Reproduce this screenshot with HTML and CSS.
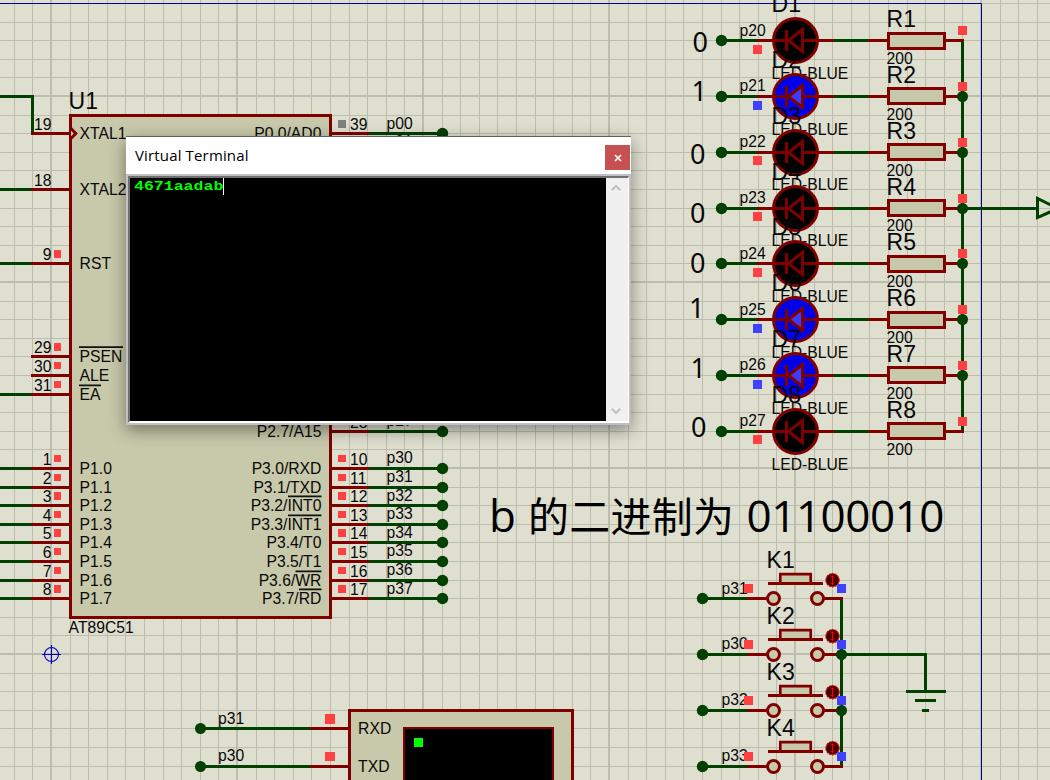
FILE: index.html
```html
<!DOCTYPE html>
<html lang="zh">
<head>
<meta charset="utf-8">
<title>Virtual Terminal</title>
<link rel="stylesheet" href="styles.css">
</head>
<body>
<main class="editor">
<svg class="sheet" width="1050" height="780" viewBox="0 0 1050 780">
  <defs>
    <pattern id="grid" x="50" y="95" width="186" height="186" patternUnits="userSpaceOnUse">
      <path class="grid" d="M20.5 0V186M38.5 0V186M57.5 0V186M75.5 0V186M94.5 0V186M113.5 0V186M131.5 0V186M150.5 0V186M168.5 0V186M0 20.5H186M0 38.5H186M0 57.5H186M0 75.5H186M0 94.5H186M0 113.5H186M0 131.5H186M0 150.5H186M0 168.5H186"/>
      <path class="grid major" d="M1 0V186M0 1H186"/>
    </pattern>
    <g id="ledwire">
      <path class="net" d="M722 0H757M834 0H868"/>
      <path class="pin" d="M757 0H772M819 0H834M868 0H888M945 0H962"/>
      <circle class="dot" cx="721.5" cy="0" r="5.7"/>
    </g>
    <g id="diode">
      <circle class="bulb" cx="795.5" cy="0" r="22"/>
      <path class="ray" d="M788.5 0L802.5 -11V11Z"/>
      <path class="mark" d="M772 0H788M803 0H819M786.5 -10.5V10.5"/>
    </g>
    <rect id="res" class="part" x="888.5" y="-7.5" width="56" height="15"/>
    <g id="key">
      <path class="net" d="M703 0H747"/>
      <path class="pin" d="M747 0H767M823 0H843"/>
      <circle class="dot" cx="702.5" cy="0" r="5.7"/>
      <circle class="part" cx="773.5" cy="0" r="6"/>
      <circle class="part" cx="817.5" cy="0" r="6"/>
      <path class="part thin" d="M780.3 -15V-24.3H810.7V-15"/>
      <path class="pin" d="M768 -15H823"/>
      <circle class="knob" cx="832.5" cy="-18.3" r="6.6"/>
      <path class="arrows" d="M832.5 -22.8V-13.8M830.3 -20.6L832.5 -22.8L834.7 -20.6M830.3 -16L832.5 -13.8L834.7 -16"/>
    </g>
  </defs>

  <rect class="paper" width="1050" height="780"/>
  <rect width="1050" height="780" fill="url(#grid)"/>
  <path class="frame" d="M0 3.5H981.5V780"/>

  <!-- U1 microcontroller -->
  <g>
    <rect class="part" x="70.5" y="115.5" width="260" height="502"/>
    <path class="net" d="M0 96.5H32.5V133.5M0 189.5H31M0 263.5H31M0 394.5H31M0 468.5H31M0 487.5H31M0 505.5H31M0 524.5H31M0 542.5H31M0 561.5H31M0 580.5H31M0 598.5H31"/>
    <path class="pin" d="M31 133.5H70M31 189.5H70M31 263.5H70M31 356.5H70M31 375.5H70M31 394.5H70M31 468.5H70M31 487.5H70M31 505.5H70M31 524.5H70M31 542.5H70M31 561.5H70M31 580.5H70M31 598.5H70"/>
    <path class="part clock" d="M71 128.5L75.8 133.5L71 138.5"/>
    <path class="pin" d="M331 133.5H369M331 431.5H369M331 468.5H369M331 487.5H369M331 505.5H369M331 524.5H369M331 542.5H369M331 561.5H369M331 580.5H369M331 598.5H369"/>
    <path class="net" d="M369 133.5H442M369 431.5H442M369 468.5H442M369 487.5H442M369 505.5H442M369 524.5H442M369 542.5H442M369 561.5H442M369 580.5H442M369 598.5H442"/>
    <g class="dot">
      <circle cx="442.5" cy="133.5" r="5.7"/><circle cx="442.5" cy="431.5" r="5.7"/><circle cx="442.5" cy="468.5" r="5.7"/><circle cx="442.5" cy="487.5" r="5.7"/><circle cx="442.5" cy="505.5" r="5.7"/><circle cx="442.5" cy="524.5" r="5.7"/><circle cx="442.5" cy="542.5" r="5.7"/><circle cx="442.5" cy="561.5" r="5.7"/><circle cx="442.5" cy="580.5" r="5.7"/><circle cx="442.5" cy="598.5" r="5.7"/>
    </g>
    <path class="hi" d="M54 250h7v8h-7zM54 343h7v8h-7zM54 362h7v7h-7zM54 381h7v7h-7zM54 455h7v7h-7zM54 474h7v7h-7zM54 492h7v8h-7zM54 511h7v7h-7zM54 529h7v8h-7zM54 548h7v7h-7zM54 567h7v7h-7zM54 585h7v8h-7z"/>
    <path class="hi" d="M338 455h8v7h-8zM338 474h8v7h-8zM338 492h8v8h-8zM338 511h8v7h-8zM338 529h8v8h-8zM338 548h8v7h-8zM338 567h8v7h-8zM338 585h8v8h-8z"/>
    <rect class="float" x="338" y="120" width="8" height="8"/>
    <text class="ref" x="68" y="109">U1</text>
    <g class="lbl end">
      <text x="52" y="130">19</text><text x="52" y="186">18</text><text x="52" y="260">9</text><text x="52" y="353">29</text><text x="52" y="372">30</text><text x="52" y="391">31</text>
      <text x="52" y="465">1</text><text x="52" y="484">2</text><text x="52" y="502">3</text><text x="52" y="521">4</text><text x="52" y="539">5</text><text x="52" y="558">6</text><text x="52" y="577">7</text><text x="52" y="595">8</text>
      <text x="322" y="139">P0.0/AD0</text><text x="322" y="437">P2.7/A15</text><text x="322" y="474">P3.0/RXD</text><text x="322" y="493">P3.1/TXD</text><text x="322" y="511">P3.2/INT0</text><text x="322" y="530">P3.3/INT1</text><text x="322" y="548">P3.4/T0</text><text x="322" y="567">P3.5/T1</text><text x="322" y="586">P3.6/WR</text><text x="322" y="604">P3.7/RD</text>
    </g>
    <g class="lbl">
      <text x="79" y="139">XTAL1</text><text x="79" y="195">XTAL2</text><text x="79" y="269">RST</text><text x="79" y="362">PSEN</text><text x="79" y="381">ALE</text><text x="79" y="400">EA</text>
      <text x="79" y="474">P1.0</text><text x="79" y="493">P1.1</text><text x="79" y="511">P1.2</text><text x="79" y="530">P1.3</text><text x="79" y="548">P1.4</text><text x="79" y="567">P1.5</text><text x="79" y="586">P1.6</text><text x="79" y="604">P1.7</text>
      <text x="68" y="633">AT89C51</text>
      <text x="349.5" y="130">39</text><text x="349.5" y="428">28</text><text x="349.5" y="465">10</text><text x="349.5" y="484">11</text><text x="349.5" y="502">12</text><text x="349.5" y="521">13</text><text x="349.5" y="539">14</text><text x="349.5" y="558">15</text><text x="349.5" y="577">16</text><text x="349.5" y="595">17</text>
      <text x="386" y="129">p00</text><text x="386" y="147">p01</text><text x="386" y="426">p27</text><text x="386" y="463">p30</text><text x="386" y="482">p31</text><text x="386" y="501">p32</text><text x="386" y="519">p33</text><text x="386" y="538">p34</text><text x="386" y="556">p35</text><text x="386" y="575">p36</text><text x="386" y="594">p37</text>
    </g>
    <path class="bar" d="M79 347.2H123M79 385.3H101M288 496.3H321.5M288 515.3H321.5M295.5 571.3H321.5M299 589.3H321.5"/>
  </g>

  <g class="origin"><circle cx="51.5" cy="654.5" r="7"/><path d="M42 654.5H61M51.5 645V664"/></g>

  <!-- LED bank -->
  <g>
    <use href="#ledwire" y="40.5"/><use href="#ledwire" y="96.5"/><use href="#ledwire" y="152.5"/><use href="#ledwire" y="208.5"/><use href="#ledwire" y="263.5"/><use href="#ledwire" y="319.5"/><use href="#ledwire" y="375.5"/><use href="#ledwire" y="431.5"/>
    <path class="net" d="M962.5 40.5V431M962 208.5H1037"/>
    <path class="pin" d="M946 40.5H964M946 431.5H964"/>
    <path class="net hollow" d="M1037.5 198.5V217.5L1058 208.5Z"/>
    <g class="dot"><circle cx="962.5" cy="96.5" r="5.5"/><circle cx="962.5" cy="152.5" r="5.5"/><circle cx="962.5" cy="208.5" r="5.5"/><circle cx="962.5" cy="263.5" r="5.5"/><circle cx="962.5" cy="319.5" r="5.5"/><circle cx="962.5" cy="375.5" r="5.5"/></g>
    <use href="#res" y="41"/><use href="#res" y="96"/><use href="#res" y="152"/><use href="#res" y="208"/><use href="#res" y="264"/><use href="#res" y="320"/><use href="#res" y="375"/><use href="#res" y="431"/>
    <path class="hi" d="M958 26h9v9h-9zM958 82h9v9h-9zM958 138h9v9h-9zM958 194h9v9h-9zM958 249h9v9h-9zM958 305h9v9h-9zM958 361h9v9h-9zM958 417h9v9h-9z"/>
    <path class="hi" d="M753 45h9v9h-9zM753 156h9v9h-9zM753 212h9v9h-9zM753 268h9v9h-9zM753 435h9v9h-9z"/>
    <path class="lo" d="M753 101h9v9h-9zM753 324h9v9h-9zM753 380h9v9h-9z"/>

    <use href="#diode" class="off" y="40.5"/><text class="ref" x="771" y="12">D1</text><text class="lbl" x="771" y="79">LED-BLUE</text>
    <use href="#diode" class="on" y="96.5"/><text class="ref" x="771" y="68">D2</text><text class="lbl" x="771" y="135">LED-BLUE</text>
    <use href="#diode" class="off" y="152.5"/><text class="ref" x="771" y="124">D3</text><text class="lbl" x="771" y="190">LED-BLUE</text>
    <use href="#diode" class="off" y="208.5"/><text class="ref" x="771" y="180">D4</text><text class="lbl" x="771" y="246">LED-BLUE</text>
    <use href="#diode" class="off" y="263.5"/><text class="ref" x="771" y="235">D5</text><text class="lbl" x="771" y="302">LED-BLUE</text>
    <use href="#diode" class="on" y="319.5"/><text class="ref" x="771" y="291">D6</text><text class="lbl" x="771" y="358">LED-BLUE</text>
    <use href="#diode" class="on" y="375.5"/><text class="ref" x="771" y="347">D7</text><text class="lbl" x="771" y="414">LED-BLUE</text>
    <use href="#diode" class="off" y="431.5"/><text class="ref" x="771" y="403">D8</text><text class="lbl" x="771" y="470">LED-BLUE</text>

    <g class="ref">
      <text x="886" y="27">R1</text><text x="886" y="83">R2</text><text x="886" y="139">R3</text><text x="886" y="195">R4</text><text x="886" y="250">R5</text><text x="886" y="306">R6</text><text x="886" y="362">R7</text><text x="886" y="418">R8</text>
    </g>
    <g class="lbl">
      <text x="886" y="64">200</text><text x="886" y="120">200</text><text x="886" y="176">200</text><text x="886" y="231">200</text><text x="886" y="287">200</text><text x="886" y="343">200</text><text x="886" y="399">200</text><text x="886" y="455">200</text>
      <text x="739" y="36">p20</text><text x="739" y="91">p21</text><text x="739" y="147">p22</text><text x="739" y="203">p23</text><text x="739" y="259">p24</text><text x="739" y="315">p25</text><text x="739" y="370">p26</text><text x="739" y="426">p27</text>
    </g>
    <g class="bit">
      <text x="692.5" y="52">0</text><text x="691.5" y="101">1</text><text x="690" y="164">0</text><text x="690" y="223">0</text><text x="690" y="273">0</text><text x="689" y="318">1</text><text x="690.5" y="378">1</text><text x="691" y="437">0</text>
    </g>
  </g>

  <g class="note">
    <text x="489" y="532">b</text>
    <text class="han" x="528" y="532" textLength="206">的二进制为</text>
    <text x="746.5" y="532" textLength="198">01100010</text>
  </g>

  <!-- push buttons -->
  <g>
    <path class="net" d="M841.5 600V765M842 654.5H925.5V691.5M906 691.5H946M915 700.5H936M922 710.5H929"/>
    <use href="#key" y="598.5"/><use href="#key" y="654.5"/><use href="#key" y="710.5"/><use href="#key" y="766.5"/>
    <circle class="dot" cx="841.5" cy="654.5" r="5.5"/><circle class="dot" cx="841.5" cy="710.5" r="5.5"/>
    <g class="ref"><text x="766" y="568">K1</text><text x="766" y="624">K2</text><text x="766" y="680">K3</text><text x="766" y="736">K4</text></g>
    <g class="lbl"><text x="721" y="594">p31</text><text x="721" y="649">p30</text><text x="721" y="705">p32</text><text x="721" y="761">p33</text></g>
    <path class="hi" d="M744 584h9v9h-9zM744 640h9v9h-9zM744 696h9v9h-9zM744 752h9v9h-9z"/>
    <path class="lo" d="M837 584h9v9h-9zM837 640h9v9h-9zM837 696h9v9h-9zM837 752h9v9h-9z"/>
  </g>

  <!-- serial terminal part -->
  <g>
    <rect class="part" x="349.5" y="710.5" width="223" height="90"/>
    <rect class="screen" x="404" y="728" width="149" height="80"/>
    <rect class="cursor" x="414" y="738" width="9" height="9"/>
    <path class="net" d="M201 728.5H310M201 766.5H310"/>
    <path class="pin" d="M310 728.5H349M310 766.5H349"/>
    <g class="dot"><circle cx="200.5" cy="728.5" r="5.5"/><circle cx="200.5" cy="766.5" r="5.5"/></g>
    <path class="hi" d="M325 714h10v10h-10zM325 752h10v9h-10z"/>
    <g class="lbl"><text x="217.5" y="724">p31</text><text x="217.5" y="761">p30</text><text x="357.5" y="734">RXD</text><text x="357.5" y="772">TXD</text></g>
  </g>
</svg>

<section class="window">
  <header class="titlebar">
    <span class="title">Virtual Terminal</span>
    <span class="close"><svg width="8" height="8" viewBox="0 0 8 8"><path d="M1 1L7 7M7 1L1 7"/></svg></span>
  </header>
  <div class="client">
    <div class="output"><span class="typed">4671aadab</span><i class="caret"></i></div>
    <div class="scroll">
      <svg width="10" height="8" viewBox="0 0 10 8"><path d="M.7 6.3L5 2L9.3 6.3"/></svg>
      <svg width="10" height="8" viewBox="0 0 10 8"><path d="M.7 1.7L5 6L9.3 1.7"/></svg>
    </div>
  </div>
</section>
</main>
</body>
</html>
```
FILE: styles.css
```css
body { margin: 0; overflow: hidden; }
.editor { position: relative; width: 1050px; height: 780px; overflow: hidden; }
.sheet { display: block; }
.paper { fill: #dfdfd0; }
.grid { stroke: #bdbdad; stroke-width: 1; fill: none; shape-rendering: crispEdges; }
.major { stroke-width: 2; }
.frame { fill: none; stroke: #0000a0; stroke-width: 1; }

.net, .pin { fill: none; stroke-width: 3; }
.net { stroke: #004000; }
.pin { stroke: #800000; }
.dot { fill: #004000; }
.part { fill: #c8c8aa; stroke: #800000; stroke-width: 3; }
.part.thin { stroke-width: 2.7; }
.clock { stroke-width: 3; }
.bar { stroke: #101010; stroke-width: 1.7; }
.hi { fill: #ff4040; }
.lo { fill: #4040ff; }
.float { fill: #808080; }
.origin { fill: none; stroke: #0000c0; stroke-width: 1.1; }

.bulb { stroke: #800000; stroke-width: 3; }
.ray { stroke: #800000; stroke-width: 2.9; fill: var(--ray); }
.mark { fill: none; stroke: #800000; stroke-width: 3; }
.off { fill: #000; --ray: #000; }
.on { fill: #0000e8; --ray: #3c3cff; }

.knob { fill: #400000; stroke: #d80000; stroke-width: 1.2; stroke-dasharray: 2.2 .8; }
.arrows { fill: none; stroke: #ff0000; stroke-width: 1; }
.screen { fill: #000; stroke: #800000; stroke-width: 2; }
.cursor { fill: #00ff00; }

.lbl, .ref { font-family: "Liberation Sans", Arial, sans-serif; fill: #080808; transform: translate(.6px, 0); }
.lbl { font-size: 15.7px; }
.ref { font-size: 23px; }
.end { text-anchor: end; transform: translate(-.6px, 0); }
.bit { font: 27px "Noto Sans", "Open Sans", sans-serif; fill: #080808; }
.note { font: 44px "Open Sans", "Noto Sans", sans-serif; fill: #000; }
.han { font: 41px "Noto Sans CJK SC", sans-serif; }

.window {
  position: absolute; left: 126px; top: 136px; width: 505px; height: 289px;
  box-sizing: border-box; display: flex; flex-direction: column;
  background: #c0c0c4; border-top: 1px solid #60605c;
  box-shadow: 0 5px 16px rgba(0, 0, 0, .42);
}
.titlebar {
  flex: none; height: 37px; box-sizing: border-box; padding: 0 1px 0 9px;
  display: flex; align-items: center; justify-content: space-between;
  background: #fff; color: #000;
}
.title { font: 15px "Open Sans", sans-serif; letter-spacing: .15px; margin-top: -2px; }
.close {
  width: 25px; height: 25px; margin-top: 4px; background: #c75050;
  display: flex; align-items: center; justify-content: center;
}
.close path { stroke: #fff; stroke-width: 1.7; fill: none; }
.client {
  flex: 1; display: flex; margin: 2px; box-sizing: border-box;
  border: solid; border-color: #707070 #fff #fff #707070; border-width: 2px 1px 2px 2px;
}
.output {
  flex: 1; background: #000; color: #00ff00; padding: 0 0 0 4px;
  display: flex; align-items: flex-start;
}
.typed {
  width: 90px; font: bold 13.5px/18px "Liberation Mono", monospace;
  white-space: nowrap; transform: scaleX(1.225); transform-origin: 0 0;
}
.caret { width: 1px; height: 17px; background: #fff; margin-left: -1px; }
.scroll {
  flex: none; width: 22px; box-sizing: border-box; padding: 6px 2px 6px 0;
  display: flex; flex-direction: column; align-items: center; justify-content: space-between;
  background: #f0f0f0;
}
.scroll path { fill: none; stroke: #c0c0c0; stroke-width: 2; }
```
